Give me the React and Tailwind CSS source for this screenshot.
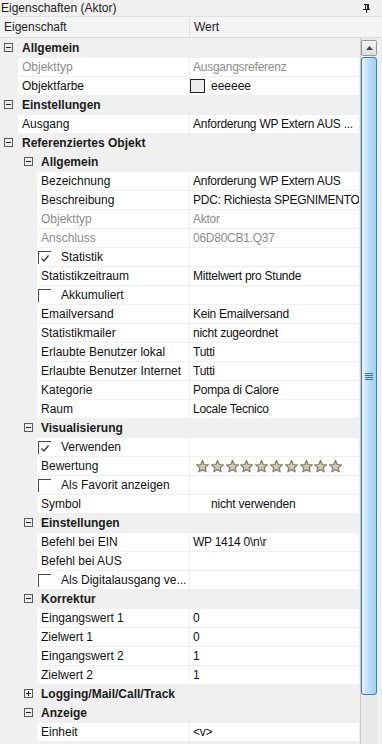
import React from "react";

const FONT = { fontFamily: '"Liberation Sans", Arial, sans-serif' };

const rows = [
  { t: "cat", l: 0, n: "Allgemein" },
  { t: "prop", l: 1, n: "Objekttyp", v: "Ausgangsreferenz", dis: true },
  { t: "prop", l: 1, n: "Objektfarbe", v: "color" },
  { t: "cat", l: 0, n: "Einstellungen" },
  { t: "prop", l: 1, n: "Ausgang", v: "Anforderung WP Extern AUS ..." },
  { t: "cat", l: 0, n: "Referenziertes Objekt" },
  { t: "cat", l: 1, n: "Allgemein" },
  { t: "prop", l: 2, n: "Bezeichnung", v: "Anforderung WP Extern AUS" },
  { t: "prop", l: 2, n: "Beschreibung", v: "PDC: Richiesta SPEGNIMENTO" },
  { t: "prop", l: 2, n: "Objekttyp", v: "Aktor", dis: true },
  { t: "prop", l: 2, n: "Anschluss", v: "06D80CB1.Q37", dis: true },
  { t: "check", l: 2, n: "Statistik", c: true },
  { t: "prop", l: 2, n: "Statistikzeitraum", v: "Mittelwert pro Stunde" },
  { t: "check", l: 2, n: "Akkumuliert", c: false },
  { t: "prop", l: 2, n: "Emailversand", v: "Kein Emailversand" },
  { t: "prop", l: 2, n: "Statistikmailer", v: "nicht zugeordnet" },
  { t: "prop", l: 2, n: "Erlaubte Benutzer lokal", v: "Tutti" },
  { t: "prop", l: 2, n: "Erlaubte Benutzer Internet", v: "Tutti" },
  { t: "prop", l: 2, n: "Kategorie", v: "Pompa di Calore" },
  { t: "prop", l: 2, n: "Raum", v: "Locale Tecnico" },
  { t: "cat", l: 1, n: "Visualisierung" },
  { t: "check", l: 2, n: "Verwenden", c: true },
  { t: "prop", l: 2, n: "Bewertung", v: "stars" },
  { t: "check", l: 2, n: "Als Favorit anzeigen", c: false },
  { t: "prop", l: 2, n: "Symbol", v: "symbol" },
  { t: "cat", l: 1, n: "Einstellungen" },
  { t: "prop", l: 2, n: "Befehl bei EIN", v: "WP 1414 0\\n\\r" },
  { t: "prop", l: 2, n: "Befehl bei AUS", v: "" },
  { t: "check", l: 2, n: "Als Digitalausgang ve...", c: false },
  { t: "cat", l: 1, n: "Korrektur" },
  { t: "prop", l: 2, n: "Eingangswert 1", v: "0" },
  { t: "prop", l: 2, n: "Zielwert 1", v: "0" },
  { t: "prop", l: 2, n: "Eingangswert 2", v: "1" },
  { t: "prop", l: 2, n: "Zielwert 2", v: "1" },
  { t: "cat", l: 1, n: "Logging/Mail/Call/Track", plus: true },
  { t: "cat", l: 1, n: "Anzeige" },
  { t: "prop", l: 2, n: "Einheit", v: "<v>" },
];

function ExpandBox({ plus }) {
  return (
    <div className="relative w-[9px] h-[9px] border border-[#5a5a5a] bg-transparent shrink-0">
      <div className="absolute left-[1px] top-[3px] w-[5px] h-px bg-[#222]" />
      {plus && <div className="absolute left-[3px] top-[1px] w-px h-[5px] bg-[#222]" />}
    </div>
  );
}

function Star() {
  return (
    <svg width="13" height="13" viewBox="1 1 22 22">
      <path
        d="M12 2 L14.9 8.6 L22 9.3 L16.6 14 L18.2 21 L12 17.3 L5.8 21 L7.4 14 L2 9.3 L9.1 8.6 Z"
        fill="#cfc9b6"
        stroke="#857d67"
        strokeWidth="2"
        strokeLinejoin="round"
      />
    </svg>
  );
}

function CheckBox({ checked }) {
  return (
    <div className="relative w-[13px] h-[13px] border-l border-t border-[#4a4a4a] bg-white shrink-0">
      {checked && (
        <svg className="absolute left-[2px] top-[3px]" width="8" height="7" viewBox="0 0 8 7">
          <path d="M0.5 3.5 L3 6 L7.5 0.5" fill="none" stroke="#333" strokeWidth="1.2" />
        </svg>
      )}
    </div>
  );
}

function Value({ r }) {
  if (r.v === "color") {
    return (
      <div className="flex items-center h-full">
        <div className="w-[15px] h-[14px] border border-[#222] bg-[#eeeeee] mr-[6px]" />
        <span>eeeeee</span>
      </div>
    );
  }
  if (r.v === "stars") {
    return (
      <div className="flex items-center h-full pl-[6px] gap-[1.8px]">
        {Array.from({ length: 10 }).map((_, i) => (
          <Star key={i} />
        ))}
      </div>
    );
  }
  if (r.v === "symbol") {
    return <div className="pl-[21px] leading-[18px] tracking-[-0.2px]">nicht verwenden</div>;
  }
  return (
    <div
      className={`pl-[3px] leading-[18px] whitespace-nowrap overflow-hidden tracking-[-0.25px] ${
        r.dis ? "text-[#8d8d8d]" : "text-[#111]"
      }`}
    >
      {r.v}
    </div>
  );
}

function Row({ r }) {
  if (r.t === "cat") {
    return (
      <div className="h-[19px] flex items-center bg-[#f0f0f0]">
        <div className={r.l === 0 ? "w-[4px] shrink-0" : "w-[24px] shrink-0"} />
        <ExpandBox plus={r.plus} />
        <div className={`font-bold text-[#1a1a1a] ${r.l === 0 ? "ml-[9px]" : "ml-[8px]"}`}>{r.n}</div>
      </div>
    );
  }
  const indent = r.l === 1 ? "w-[18px]" : "w-[37px]";
  return (
    <div className="h-[19px] flex pt-px">
      <div className={`${indent} shrink-0`} />
      <div className="flex-1 bg-white h-[18px] flex items-center overflow-hidden">
        {r.t === "check" ? (
          <div className="flex items-center h-full pl-[1px]">
            <CheckBox checked={r.c} />
            <span className="ml-[10px] text-[#111]">{r.n}</span>
          </div>
        ) : (
          <span className={`pl-[4px] whitespace-nowrap ${r.dis ? "text-[#8d8d8d]" : "text-[#111]"}`}>{r.n}</span>
        )}
      </div>
      <div className="w-[169px] ml-px bg-white h-[18px] shrink-0">
        {r.t === "prop" && <Value r={r} />}
      </div>
    </div>
  );
}

export default function App() {
  return (
    <div className="w-[382px] h-[744px] bg-[#f0f0f0] overflow-hidden text-[12px] text-[#111]" style={FONT}>
      {/* Title */}
      <div className="h-[17px] flex items-center justify-between pl-[1px] pr-[12px] border-b border-[#e2e2e2]">
        <span className="leading-[14px] text-[#222]">Eigenschaften (Aktor)</span>
        <svg width="7" height="9" viewBox="0 0 7 9">
          <rect x="1" y="0" width="5" height="1" fill="#222" />
          <rect x="2" y="1" width="1" height="4" fill="#222" />
          <rect x="4" y="1" width="2" height="4" fill="#222" />
          <rect x="0" y="5" width="7" height="1" fill="#222" />
          <rect x="3" y="6" width="1" height="3" fill="#222" />
        </svg>
      </div>
      {/* Header */}
      <div className="h-[21px] flex items-center bg-[#f4f4f4] border-b border-[#dcdcdc]">
        <div className="w-[190px] pl-[4px] border-r border-[#e0e0e0] h-full flex items-center text-[#222]">Eigenschaft</div>
        <div className="pl-[4px] text-[#222]">Wert</div>
      </div>
      {/* Body */}
      <div className="flex">
        <div className="w-[359px] shrink-0">
          {rows.map((r, i) => (
            <Row key={i} r={r} />
          ))}
        </div>
        {/* Scrollbar */}
        <div className="ml-[1px] w-[17px] pt-[2px] flex flex-col h-[706px] bg-[#e9e9e9] border-l border-[#c9c9c9]">
          <div className="h-[16px] border border-[#9a9a9a] rounded-[2px] bg-gradient-to-b from-[#f6f6f6] to-[#dcdcdc] flex items-center justify-center">
            <svg width="7" height="4" viewBox="0 0 7 4">
              <path d="M0 4 L3.5 0 L7 4 Z" fill="#444" />
            </svg>
          </div>
          <div className="mt-[1px] h-[638px] border border-[#3d7bad] rounded-[3px] bg-gradient-to-r from-[#e8f5fd] via-[#b6ddf8] to-[#a0d0f2] flex items-center justify-center">
            <div className="flex flex-col gap-[1px]">
              <div className="w-[8px] h-px bg-[#3d6f9a]" />
              <div className="w-[8px] h-px bg-[#3d6f9a]" />
              <div className="w-[8px] h-px bg-[#3d6f9a]" />
              <div className="w-[8px] h-px bg-[#3d6f9a]" />
            </div>
          </div>
        </div>
      </div>
    </div>
  );
}
